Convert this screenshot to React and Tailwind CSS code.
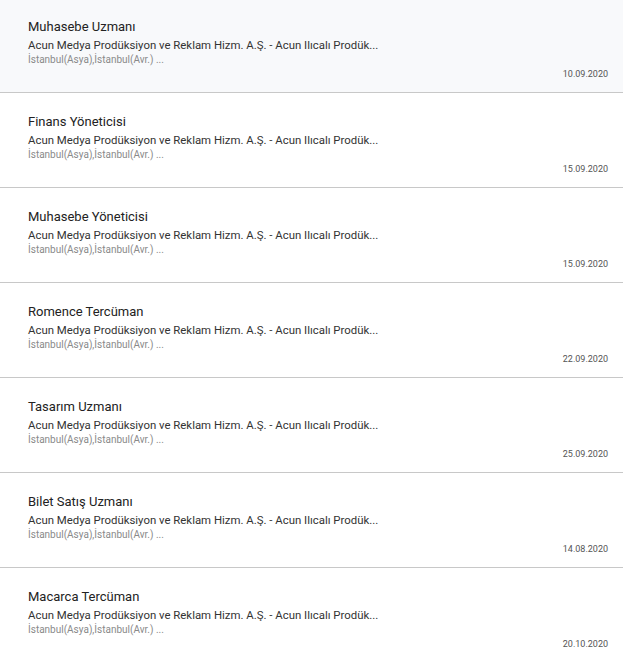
import React from 'react';

const jobs = [
    { title: 'Muhasebe Uzmanı', date: '10.09.2020', active: true },
    { title: 'Finans Yöneticisi', date: '15.09.2020' },
    { title: 'Muhasebe Yöneticisi', date: '15.09.2020' },
    { title: 'Romence Tercüman', date: '22.09.2020' },
    { title: 'Tasarım Uzmanı', date: '25.09.2020' },
    { title: 'Bilet Satış Uzmanı', date: '14.08.2020' },
    { title: 'Macarca Tercüman', date: '20.10.2020' },
];

const App = () => {
    return (
        <div className="w-[643px] h-[665px] overflow-hidden bg-white" style={{ fontFamily: 'Roboto, "Liberation Sans", sans-serif' }}>
            <ul className="w-[623px] -mt-[2px]">
                {jobs.map((job, i) => (
                    <li
                        key={job.title}
                        className={`h-[95px] pl-[28px] pr-[15px] pt-[21px] flex flex-col ${i < jobs.length - 1 ? 'border-b border-[#c8c8c8]' : ''} ${job.active ? 'bg-[#f8f9fb]' : 'bg-white'}`}
                    >
                        <div className="text-[13px] leading-[16px] text-[#222]">{job.title}</div>
                        <div className="mt-[3px] text-[11.4px] leading-[14px] text-[#333]">
                            Acun Medya Prodüksiyon ve Reklam Hizm. A.Ş. - Acun Ilıcalı Prodük...
                        </div>
                        <div className="mt-[1px] text-[10px] leading-[14px] text-[#8a8a8a]">İstanbul(Asya),İstanbul(Avr.) ...</div>
                        <div className="text-right text-[9px] leading-[14px] text-[#555]">{job.date}</div>
                    </li>
                ))}
            </ul>
        </div>
    );
};

export default App;
